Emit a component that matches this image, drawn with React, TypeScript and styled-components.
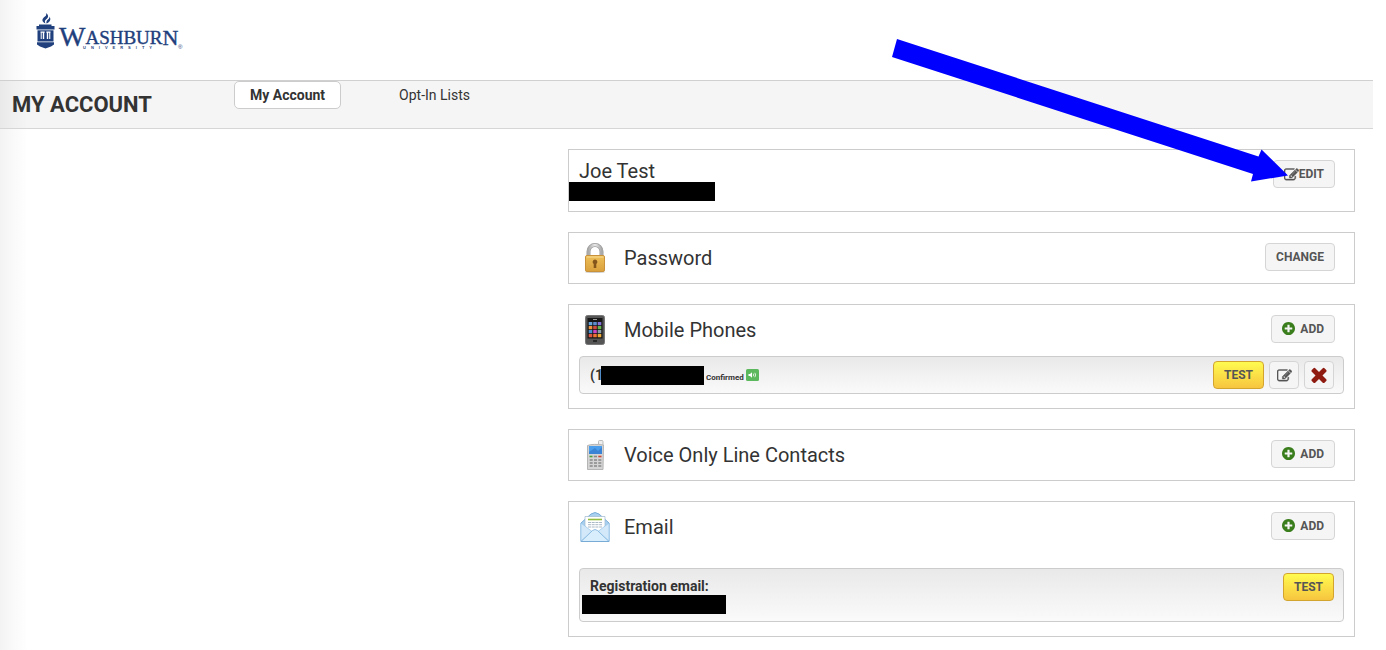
import React from "react";
import styled, { createGlobalStyle } from "styled-components";

const GlobalStyle = createGlobalStyle`
  *, *::before, *::after { box-sizing: border-box; }
  body {
    margin: 0;
    background: #fff;
    color: #333;
    font-family: Roboto, "Liberation Sans", sans-serif;
    font-size: 14px;
    line-height: 20px;
  }
  h1, h2, p { margin: 0; }
`;

const Page = styled.div`
  position: relative;
  min-height: 100vh;
  margin-right: 13px;
  background: linear-gradient(to right, #f3f3f3 0, #f9f9f9 12px, #fff 28px);
`;

const Header = styled.header`
  height: 80px;
  padding: 12px 36px;
`;

const LogoLink = styled.a`
  display: inline-block;
  svg { display: block; }
`;

const AccountBar = styled.div`
  display: flex;
  height: 49px;
  border-top: 1px solid #d0d0d0;
  border-bottom: 1px solid #d6d6d6;
  background: rgba(0, 0, 0, 0.04);
`;

const PageTitle = styled.h1`
  width: 234px;
  padding-left: 12px;
  font-size: 22px;
  font-weight: 700;
  line-height: 48px;
`;

const Tabs = styled.nav`
  display: flex;
  align-items: flex-start;
  gap: 42px;
`;

const Tab = styled.a<{ $active?: boolean }>`
  height: 28px;
  padding: 0 15px;
  border: 1px solid ${(p) => (p.$active ? "#ccc" : "transparent")};
  border-radius: 5px;
  background: ${(p) => (p.$active ? "#fff" : "transparent")};
  color: #333;
  font-weight: ${(p) => (p.$active ? 700 : 400)};
  line-height: 26px;
  text-decoration: none;
`;

const Cards = styled.main`
  display: flex;
  flex-direction: column;
  gap: 20px;
  margin-left: 568px;
  padding: 20px 18px 13px 0;
`;

const Card = styled.section<{ $hasRows?: boolean }>`
  padding: 10px 10px ${(p) => (p.$hasRows ? 14 : 10)}px;
  border: 1px solid #ccc;
  background: #fff;
`;

const CardHead = styled.div`
  display: flex;
  align-items: flex-start;
  min-height: 30px;
  padding-right: 9px;
`;

const CardIcon = styled.svg`
  width: 30px;
  height: 30px;
  margin: 0 14px 0 1px;
`;

const CardTitle = styled.h2<{ $tall?: boolean }>`
  flex: 1;
  font-size: 20px;
  font-weight: 400;
  line-height: ${(p) => (p.$tall ? 30 : 22)}px;
`;

const Person = styled.div`
  flex: 1;
  height: 41px;
`;

const Redacted = styled.div<{ $width: number; $outdent?: number }>`
  width: ${(p) => p.$width}px;
  height: 19px;
  margin-left: ${(p) => -(p.$outdent ?? 0)}px;
  background: #000;
`;

const Button = styled.button<{ $tone?: "yellow"; $square?: boolean }>`
  display: inline-flex;
  align-items: center;
  justify-content: center;
  flex: none;
  width: ${(p) => (p.$square ? "30px" : "auto")};
  height: 28px;
  padding: 0 ${(p) => (p.$square ? 0 : 10)}px;
  border: 1px solid ${(p) => (p.$tone ? "#d3a52f" : "#d5d5d5")};
  border-radius: 4px;
  background: ${(p) => (p.$tone ? "linear-gradient(#fffb4f, #f7c53f)" : "#f5f5f5")};
  color: #555;
  font: 700 12px/18px Roboto, "Liberation Sans", sans-serif;
  cursor: pointer;
`;

const Glyph = styled.svg<{ $gap?: number; $lift?: number }>`
  width: ${(p) => p.width ?? 16}px;
  height: ${(p) => p.height ?? 16}px;
  margin-right: ${(p) => p.$gap ?? 0}px;
  margin-bottom: ${(p) => p.$lift ?? 0}px;
  fill: currentColor;
`;

const Row = styled.div<{ $offset: number; $tall?: boolean }>`
  display: flex;
  align-items: flex-start;
  gap: 5px;
  min-height: ${(p) => (p.$tall ? 54 : 38)}px;
  margin-top: ${(p) => p.$offset}px;
  padding: 4px 9px 4px 10px;
  border: 1px solid #ccc;
  border-radius: 4px;
  background: linear-gradient(#e9e9e9, #fafafa);
`;

const Contact = styled.div`
  display: flex;
  flex: 1;
  align-items: center;
  height: 28px;
  font-weight: 700;
`;

const Status = styled.span`
  margin: 5px 2px 0;
  font-size: 8px;
  line-height: 10px;
`;

const VoiceBadge = styled.svg`
  width: 13px;
  height: 12px;
`;

const Registration = styled.div`
  flex: 1;
  padding-top: 4px;
  font-weight: 700;
  line-height: 18px;
`;

const Pointer = styled.svg`
  position: absolute;
  top: 38px;
  right: 84px;
  width: 398px;
  height: 146px;
  pointer-events: none;
`;

const EDIT_PATH =
  "M888 1184l116-116-152-152-116 116v56h96v96h56zm440-720q-16-16-33 1l-350 350q-17 17-1 33t33-1l350-350q17-17 1-33zm80 594v190q0 119-84.5 203.5t-203.5 84.5h-832q-119 0-203.5-84.5t-84.5-203.5v-832q0-119 84.5-203.5t203.5-84.5h832q63 0 117 25 15 7 18 23 3 17-9 29l-49 49q-14 14-32 8-23-6-45-6h-832q-66 0-113 47t-47 113v832q0 66 47 113t113 47h832q66 0 113-47t47-113v-126q0-13 9-22l64-64q15-15 35-7t20 29zm-96-738l288 288-672 672h-288v-288zm444 132l-92 92-288-288 92-92q28-28 68-28t68 28l152 152q28 28 28 68t-28 68z";
const PLUS_PATH =
  "M1344 960v-128q0-26-19-45t-45-19h-256v-256q0-26-19-45t-45-19h-128q-26 0-45 19t-19 45v256h-256q-26 0-45 19t-19 45v128q0 26 19 45t45 19h256v256q0 26 19 45t45 19h128q26 0 45-19t19-45v-256h256q26 0 45-19t19-45zm320-64q0 209-103 385.5t-279.5 279.5-385.5 103-385.5-103-279.5-279.5-103-385.5 103-385.5 279.5-279.5 385.5-103 385.5 103 279.5 279.5 103 385.5z";
const TIMES_PATH =
  "M1490 1322q0 40-28 68l-136 136q-28 28-68 28t-68-28l-294-294-294 294q-28 28-68 28t-68-28l-136-136q-28-28-28-68t28-68l294-294-294-294q-28-28-28-68t28-68l136-136q28-28 68-28t68 28l294 294 294-294q28-28 68-28t68 28l136 136q28 28 28 68t-28 68l-294 294 294 294q28 28 28 68z";

function EditIcon() {
  return (
    <Glyph viewBox="0 80 1792 1560" width={15} height={13} aria-hidden="true">
      <path d={EDIT_PATH} stroke="currentColor" strokeWidth="50" />
    </Glyph>
  );
}

function AddButton({ label }: { label: string }) {
  return (
    <Button type="button" aria-label={label}>
      <Glyph viewBox="128 128 1536 1536" width={13} height={13} $gap={5} $lift={2} color="#3a7d1c" aria-hidden="true">
        <path d={PLUS_PATH} />
      </Glyph>
      ADD
    </Button>
  );
}

function Logo() {
  return (
    <svg width="150" height="40" viewBox="0 0 150 40" fill="#1f3f7d" role="img" aria-label="Washburn University">
      <path d="M9.5 11.5C5 9.5 6 6.500 9 4.500C10.500 3.500 10.500 2 9.800 1C13 3 12.500 5.500 10.500 7C9 8.200 8.300 9.300 9.500 11.500Z" />
      <path d="M10.500 11.500C10 9.700 10.700 8.700 12 7.600C13.500 6.500 13.500 5.500 13.300 4.600C15.500 7 14 10.700 10.500 11.500Z" />
      <path d="M3 12.500H15.500V14H18.500V17.500H0.500V14H3Z" />
      <path d="M1.500 18.300H17.500V29.500H1.500Z" />
      <path d="M4.500 19.500H8.700V20.700H8.200V27H6.800V20.700H4.500ZM10.300 19.500H14.500V20.700H12.200V27H10.800V20.700H10.300ZM13.200 20.700H14.300V27H13.200ZM4.700 20.700H5.700V27H4.700Z" fill="#fff" />
      <path d="M1 30.300H18V32.500L15 34.500L9.500 36.500L4 34.500L1 32.500Z" />
      <g fontFamily="Liberation Serif, serif" stroke="#1f3f7d" strokeWidth="0.400">
        <text x="23" y="34" fontSize="28">
          W<tspan y="32" fontSize="19">ASHBUR</tspan>
          <tspan y="33" fontSize="22">N</tspan>
        </text>
      </g>
      <text x="47" y="37" fontFamily="Liberation Sans, sans-serif" fontSize="4" fontWeight="700" letterSpacing="5">
        UNIVERSITY
      </text>
      <text x="142" y="37" fontFamily="Liberation Sans, sans-serif" fontSize="6">®</text>
    </svg>
  );
}

function LockIcon() {
  return (
    <CardIcon viewBox="0 0 30 30" aria-hidden="true">
      <defs>
        <linearGradient id="brass" x2="0" y2="1">
          <stop stopColor="#eec05a" />
          <stop offset="1" stopColor="#d9a03c" />
        </linearGradient>
        <linearGradient id="steel">
          <stop stopColor="#aaa" />
          <stop offset="0.500" stopColor="#e8e8e8" />
          <stop offset="1" stopColor="#aaa" />
        </linearGradient>
      </defs>
      <path d="M8.500 15V8.500a6.500 6.500 0 0 1 13 0V15" fill="none" stroke="#9a9a9a" strokeWidth="4" />
      <path d="M8.500 15V8.500a6.500 6.500 0 0 1 13 0V15" fill="none" stroke="url(#steel)" strokeWidth="2.600" />
      <ellipse cx="15" cy="29" rx="10" ry="1" fill="#ccc" />
      <rect x="5.500" y="12.500" width="19" height="16" rx="1.500" fill="url(#brass)" stroke="#c8913a" />
      <path d="M6.500 14H23.500" stroke="#f8dc94" />
      <path d="M15 16.500a2.400 2.400 0 0 1 1.300 4.400V25h-2.600v-4.100A2.400 2.400 0 0 1 15 16.500Z" fill="#85561c" />
    </CardIcon>
  );
}

const APP_COLORS = ["#68a5dc", "#5d8ed0", "#8572d8", "#ed963e", "#d14a40", "#65b64d", "#4c8fd1", "#cb45c4", "#8b9eac", "#dc5645", "#ef7434", "#efab35"];

function SmartphoneIcon() {
  return (
    <CardIcon viewBox="0 0 30 30" aria-hidden="true">
      <rect x="5.500" y="0.500" width="19" height="29" rx="2" fill="#555" stroke="#777" />
      <rect x="7.500" y="3" width="15" height="20.500" fill="#171717" />
      <path d="M13 4.500H17" stroke="#999" />
      <path d="M13 26H17" stroke="#1c1c1c" strokeWidth="1.600" />
      {APP_COLORS.map((color, i) => (
        <rect key={color} x={8.7 + (i % 3) * 4.5} y={7 + Math.floor(i / 3) * 4} width="3.600" height="3.200" rx="0.500" fill={color} />
      ))}
    </CardIcon>
  );
}

function HandsetIcon() {
  return (
    <CardIcon viewBox="0 0 30 30" aria-hidden="true">
      <rect x="18.500" y="0.500" width="4.500" height="6" rx="1" fill="#eee" stroke="#bbb" />
      <path d="M7.500 5.500Q13 3.500 23.500 5L23 29.500H7.500Z" fill="#d4d4d4" stroke="#b5b5b5" />
      <rect x="9" y="6" width="13" height="8" fill="#4b9eec" />
      <path d="M9 12L15 8L18 11L22 7V14H9Z" fill="#3a83d5" />
      <path d="M9.500 16.500H12.500" stroke="#4a9f38" strokeWidth="1.600" />
      <path d="M13.800 16.500H17" stroke="#888" strokeWidth="1.600" />
      <path d="M18.300 16.500H21.500" stroke="#d04432" strokeWidth="1.600" />
      <path d="M9.700 20H21.500M9.700 23H21.500M9.700 26H21.500" stroke="#888" strokeWidth="1.600" strokeDasharray="3 1.300" />
    </CardIcon>
  );
}

function EmailIcon() {
  return (
    <CardIcon viewBox="0 0 30 30" aria-hidden="true">
      <path d="M1 11L11 2Q15 -1 19 2L29 11V29.500H1Z" fill="#a9d0ef" stroke="#78acd7" />
      <path d="M5 4.500H25V21L15 25L5 20Z" fill="#fff" stroke="#9fb9cf" strokeWidth="0.700" />
      <path d="M8 7.500H22" stroke="#93bd3e" strokeWidth="1.600" />
      <path d="M8 10.500H22M8 12.700H22M8 15H22" stroke="#a9b8c5" strokeDasharray="3 0.700" />
      <path d="M1 11L12 19.500L1 29.500ZM29 11L18 19.500L29 29.500Z" fill="#d3e9fa" stroke="#94c3e8" strokeWidth="0.700" />
      <path d="M1 29.500L12.500 18.500Q15 16.500 17.500 18.500L29 29.500Z" fill="#d9eefc" stroke="#79afd9" strokeWidth="0.800" />
      <path d="M1 29.500H29" stroke="#78acd7" />
    </CardIcon>
  );
}

export default function App() {
  return (
    <>
      <GlobalStyle />
      <Page>
        <Header>
          <LogoLink href="#home">
            <Logo />
          </LogoLink>
        </Header>
        <AccountBar>
          <PageTitle>MY ACCOUNT</PageTitle>
          <Tabs>
            <Tab href="#account" $active>My Account</Tab>
            <Tab href="#lists">Opt-In Lists</Tab>
          </Tabs>
        </AccountBar>
        <Cards>
          <Card>
            <CardHead>
              <Person>
                <CardTitle>Joe Test</CardTitle>
                <Redacted $width={146} $outdent={10} />
              </Person>
              <Button type="button">
                <EditIcon />
                EDIT
              </Button>
            </CardHead>
          </Card>
          <Card>
            <CardHead>
              <LockIcon />
              <CardTitle $tall>Password</CardTitle>
              <Button type="button">CHANGE</Button>
            </CardHead>
          </Card>
          <Card $hasRows>
            <CardHead>
              <SmartphoneIcon />
              <CardTitle $tall>Mobile Phones</CardTitle>
              <AddButton label="Add mobile phone" />
            </CardHead>
            <Row $offset={11}>
              <Contact>
                (1
                <Redacted $width={103} $outdent={2} />
                <Status>Confirmed</Status>
                <VoiceBadge viewBox="0 0 13 12" role="img" aria-label="Voice enabled">
                  <rect width="13" height="12" rx="1.500" fill="#5cb85c" />
                  <path d="M2.500 5H4L6 3.300V8.700L4 7H2.500Z" fill="#fff" />
                  <path d="M7.300 4.700Q8.200 6 7.300 7.300M8.800 3.800Q10.500 6 8.800 8.200" fill="none" stroke="#fff" strokeWidth="0.800" />
                </VoiceBadge>
              </Contact>
              <Button type="button" $tone="yellow">TEST</Button>
              <Button type="button" $square aria-label="Edit phone">
                <EditIcon />
              </Button>
              <Button type="button" $square aria-label="Delete phone">
                <Glyph viewBox="302 302 1188 1252" width={16} height={16} color="#8f1a10" aria-hidden="true">
                  <path d={TIMES_PATH} />
                </Glyph>
              </Button>
            </Row>
          </Card>
          <Card>
            <CardHead>
              <HandsetIcon />
              <CardTitle $tall>Voice Only Line Contacts</CardTitle>
              <AddButton label="Add voice only line" />
            </CardHead>
          </Card>
          <Card $hasRows>
            <CardHead>
              <EmailIcon />
              <CardTitle $tall>Email</CardTitle>
              <AddButton label="Add email" />
            </CardHead>
            <Row $offset={26} $tall>
              <Registration>
                <p>Registration email:</p>
                <Redacted $width={144} $outdent={8} />
              </Registration>
              <Button type="button" $tone="yellow">TEST</Button>
            </Row>
          </Card>
        </Cards>
        <Pointer viewBox="891 38 398 146" aria-hidden="true">
          <path d="M897 39L1258.500 156.500L1261.500 149.500L1288 175.500L1251 181.500L1253 174L892 57Z" fill="#00f" />
        </Pointer>
      </Page>
    </>
  );
}
